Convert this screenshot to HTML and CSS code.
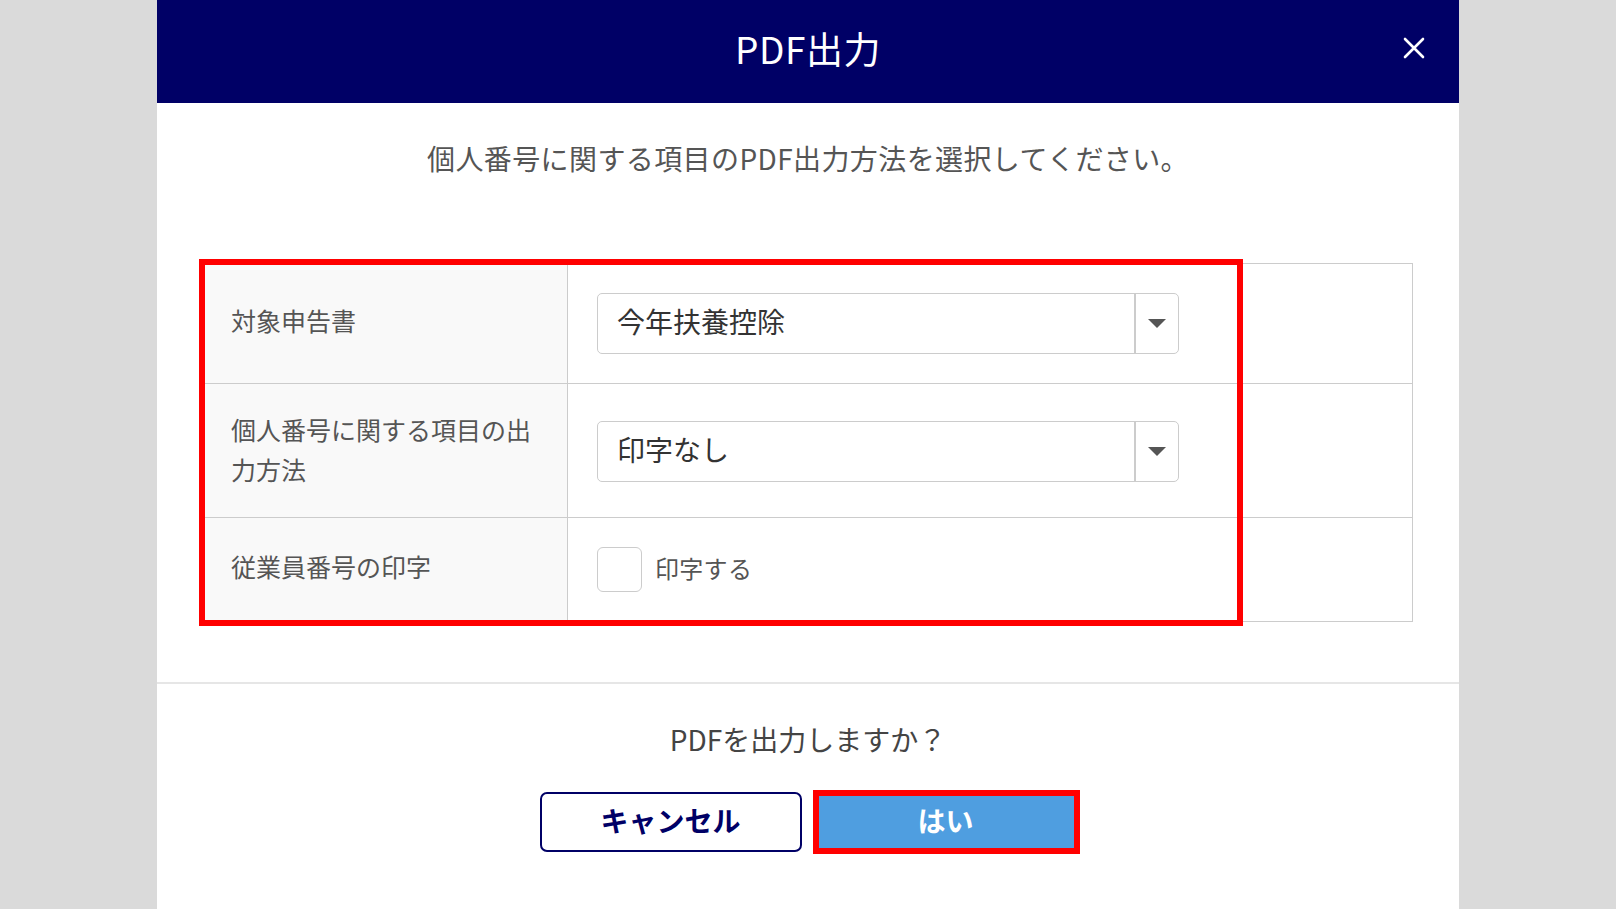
FILE: index.html
```html
<!DOCTYPE html>
<html lang="ja">
<head>
<meta charset="utf-8">
<title>PDF出力</title>
<link rel="stylesheet" href="styles.css">
</head>
<body>
<div class="modal">
  <header class="modal-header">
    <span class="spacer"></span>
    <h1 class="modal-title">PDF出力</h1>
    <button class="close-btn" aria-label="閉じる">
      <svg width="22" height="22" viewBox="0 0 22 22"><path d="M2 2 L20 20 M20 2 L2 20" stroke="#fff" stroke-width="2.6" stroke-linecap="round" fill="none"/></svg>
    </button>
  </header>

  <section class="modal-body">
    <p class="lead">個人番号に関する項目のPDF出力方法を選択してください。</p>

    <div class="form-table-wrap">
      <div class="form-table">
        <div class="row row-1">
          <div class="label-cell">対象申告書</div>
          <div class="value-cell">
            <div class="select">
              <span class="select-text">今年扶養控除</span>
              <span class="select-arrow"><span class="triangle"></span></span>
            </div>
          </div>
        </div>
        <div class="row row-2">
          <div class="label-cell">個人番号に関する項目の出力方法</div>
          <div class="value-cell">
            <div class="select">
              <span class="select-text">印字なし</span>
              <span class="select-arrow"><span class="triangle"></span></span>
            </div>
          </div>
        </div>
        <div class="row row-3">
          <div class="label-cell">従業員番号の印字</div>
          <div class="value-cell">
            <label class="check">
              <span class="check-box"></span>
              <span class="check-label">印字する</span>
            </label>
          </div>
        </div>
      </div>
      <div class="annotation annotation-table"></div>
    </div>
  </section>

  <footer class="modal-footer">
    <p class="question">PDFを出力しますか？</p>
    <div class="actions">
      <button class="btn btn-cancel">キャンセル</button>
      <div class="btn-wrap">
        <button class="btn btn-ok">はい</button>
        <div class="annotation annotation-btn"></div>
      </div>
    </div>
  </footer>
</div>
</body>
</html>
```

FILE: styles.css
```css
* { box-sizing: border-box; }

html, body {
  margin: 0;
  padding: 0;
}

body {
  background: #dadada;
  font-family: "Noto Sans CJK JP", "Noto Sans", sans-serif;
  color: #555;
  overflow: hidden;
}

.modal {
  width: 1302px;
  min-height: 909px;
  margin: 0 auto;
  background: #fff;
}

.modal-header {
  height: 103px;
  background: #000066;
  display: grid;
  grid-template-columns: 1fr auto 1fr;
  align-items: center;
}

.modal-title {
  margin: 0;
  color: #fff;
  font-size: 37px;
  font-weight: 400;
  line-height: 1;
  padding-bottom: 6px;
  letter-spacing: 0.5px;
}

.close-btn {
  justify-self: end;
  margin-right: 34px;
  margin-bottom: 8px;
  background: none;
  border: 0;
  padding: 0;
  width: 22px;
  height: 22px;
  display: flex;
}

.modal-body {
  padding: 0 46px;
}

.lead {
  margin: 35px 0 0;
  text-align: center;
  font-size: 28px;
  line-height: 40px;
  letter-spacing: 0.4px;
  color: #555;
}

.form-table-wrap {
  position: relative;
  margin-top: 85px;
}

.form-table {
  border: 1px solid #ccc;
}

.row {
  display: grid;
  grid-template-columns: 364px 1fr;
}

.row + .row {
  border-top: 1px solid #ccc;
}

.row-1 { height: 119px; }
.row-2 { height: 134px; }
.row-3 { height: 104px; }

.label-cell {
  background: #f9f9f9;
  border-right: 1px solid #ccc;
  padding: 0 24px 8px 27px;
  display: flex;
  align-items: center;
  font-size: 25px;
  line-height: 40px;
  color: #555;
}

.row-2 .label-cell { padding-bottom: 4px; }

.value-cell {
  display: flex;
  align-items: center;
  padding-left: 29px;
}

.select {
  width: 582px;
  height: 61px;
  border: 1px solid #ccc;
  border-radius: 5px;
  display: flex;
  background: #fff;
}

.row-2 .select { margin-top: 2px; }

.select-text {
  flex: 1;
  display: flex;
  align-items: center;
  padding: 0 0 6px 19px;
  font-size: 28px;
  color: #333;
}

.select-arrow {
  width: 44px;
  border-left: 2px solid #ccc;
  display: flex;
  align-items: center;
  justify-content: center;
}

.triangle {
  width: 0;
  height: 0;
  border-left: 9px solid transparent;
  border-right: 9px solid transparent;
  border-top: 9px solid #555;
}

.check {
  display: flex;
  align-items: center;
  gap: 13px;
}

.check-box {
  width: 45px;
  height: 45px;
  border: 1px solid #ccc;
  border-radius: 6px;
  background: #fff;
}

.check-label {
  font-size: 24px;
  color: #555;
  padding-bottom: 4px;
  letter-spacing: 0.3px;
}

.annotation {
  position: absolute;
  border: 6px solid #ff0000;
  pointer-events: none;
}

.annotation-table {
  left: -4px;
  top: -4px;
  width: 1044px;
  height: 367px;
}

.modal-footer {
  margin-top: 60px;
  border-top: 2px solid #e6e6e6;
  text-align: center;
}

.question {
  margin: 35px 0 0;
  font-size: 28px;
  line-height: 40px;
  color: #444;
}

.actions {
  margin-top: 33px;
  display: flex;
  justify-content: center;
  gap: 13px;
}

.btn {
  width: 262px;
  height: 60px;
  font-family: "Noto Sans CJK JP", "Noto Sans", sans-serif;
  font-size: 28px;
  font-weight: 700;
  padding: 0 0 4px;
  cursor: pointer;
}

.btn-cancel {
  background: #fff;
  color: #000066;
  border: 2px solid #000066;
  border-radius: 7px;
}

.btn-wrap {
  position: relative;
}

.btn-ok {
  background: #4f9ee0;
  color: #fff;
  border: 0;
  border-radius: 4px;
}

.annotation-btn {
  left: -2px;
  right: -3px;
  top: -2px;
  bottom: -2px;
}
```
